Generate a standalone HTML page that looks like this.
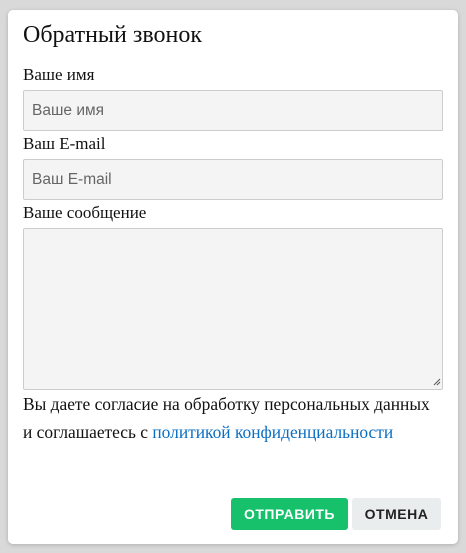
<!DOCTYPE html>
<html><head><meta charset="utf-8"><style>
body{margin:0;width:466px;height:553px;background:#d9d9d9;position:relative;overflow:hidden}
.card{position:absolute;left:8px;top:10px;width:450px;height:534px;background:#fff;border-radius:5px;box-shadow:0 1px 4px rgba(0,0,0,.2)}
.s{font-family:"Liberation Serif",serif;color:#111;position:absolute;left:15px;white-space:nowrap}
.in{position:absolute;left:15px;height:39px;background:#f4f4f4;border:1px solid #ccc;border-radius:2px;font-family:"Liberation Sans",sans-serif;font-size:15.5px;color:#666;line-height:39px;padding-left:8px;box-sizing:content-box;width:410px}
.btn{position:absolute;top:488px;height:32px;border-radius:3px;font-family:"Liberation Sans",sans-serif;font-weight:bold;font-size:14px;line-height:32px;text-align:center;letter-spacing:.5px}
</style></head><body><div class="card">
<div class="s" style="top:12px;font-size:24px">Обратный звонок</div>
<div class="s" style="top:55px;font-size:17px">Ваше имя</div>
<div class="in" style="top:80px">Ваше имя</div>
<div class="s" style="top:124px;font-size:17px">Ваш E-mail</div>
<div class="in" style="top:149px">Ваш E-mail</div>
<div class="s" style="top:193px;font-size:17px">Ваше сообщение</div>
<div class="in" style="top:218px;height:160px"></div>
<svg style="position:absolute;left:425px;top:368px" width="8" height="8"><path d="M1 7L7 1M4 7L7 4" stroke="#555" stroke-width="1"/></svg>
<div class="s" style="top:384px;font-size:17.4px">Вы даете согласие на обработку персональных данных</div>
<div class="s" style="top:412px;font-size:17.4px">и соглашаетесь с <span style="color:#0a6fc2">политикой конфиденциальности</span></div>
<div class="btn" style="left:223px;width:117px;background:#17c16c;color:#fff">ОТПРАВИТЬ</div>
<div class="btn" style="left:344px;width:89px;background:#e9edee;color:#222">ОТМЕНА</div>
</div></body></html>
